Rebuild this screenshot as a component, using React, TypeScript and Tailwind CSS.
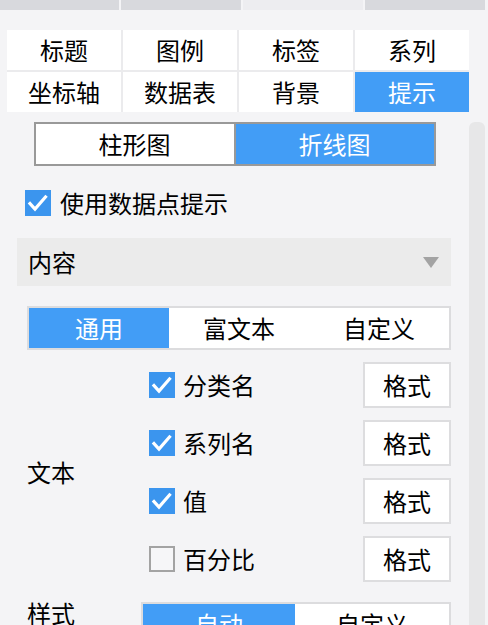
import React from 'react';

const font = { fontFamily: '"Noto Sans CJK SC", "Noto Sans", sans-serif' };

const Check = ({ checked }: { checked: boolean }) =>
  checked ? (
    <div className="w-[26px] h-[26px] bg-[#3b95ee] flex items-center justify-center shrink-0">
      <svg width="26" height="26" viewBox="0 0 26 26">
        <path d="M5 13.5l5 5.5L20.5 7" fill="none" stroke="white" strokeWidth="3.2" strokeLinecap="square" />
      </svg>
    </div>
  ) : (
    <div className="w-[26px] h-[26px] border-2 border-[#a3a3a3] bg-[#f6f6f8] shrink-0" />
  );

const FormatRow = ({ label, checked }: { label: string; checked: boolean }) => (
  <div className="h-[46px] flex items-center justify-between">
    <div className="flex items-center gap-[8px]">
      <Check checked={checked} />
      <span className="text-[24px] leading-[26px]">{label}</span>
    </div>
    <button className="w-[88px] h-[46px] bg-white border-2 border-[#dddddf] text-[24px] leading-[26px]">格式</button>
  </div>
);

const tabs = ['标题', '图例', '标签', '系列', '坐标轴', '数据表', '背景', '提示'];

export default function App() {
  return (
    <div className="w-[488px] h-[625px] overflow-hidden bg-[#f4f4f6] text-black" style={font}>
      <div className="flex gap-[2px] h-[10px]">
        <div className="w-[119px] bg-[#d8d9dd]" />
        <div className="w-[120px] bg-[#d8d9dd]" />
        <div className="w-[120px] bg-[#ededf0]" />
        <div className="w-[120px] bg-[#d8d9dd]" />
      </div>

      <div className="mt-[20px] ml-[7px] w-[462px] grid grid-cols-4 gap-[2px] bg-[#ebebed]">
        {tabs.map((t, i) => (
          <div
            key={t}
            className={
              'h-[40px] flex items-center justify-center text-[24px] ' +
              (i === 7 ? 'bg-[#429df6] text-white' : 'bg-white')
            }
          >
            {t}
          </div>
        ))}
      </div>

      <div className="flex mt-[10px]">
        <div className="w-[469px]">
          <div className="mx-auto w-[402px] h-[44px] border-2 border-[#999999] flex text-[24px]">
            <div className="flex-1 bg-white flex items-center justify-center">柱形图</div>
            <div className="w-[2px] bg-[#999999]" />
            <div className="flex-1 bg-[#429df6] text-white flex items-center justify-center">折线图</div>
          </div>

          <div className="mt-[24px] ml-[25px] flex items-center gap-[9px]">
            <Check checked />
            <span className="text-[24px] leading-[26px]">使用数据点提示</span>
          </div>

          <div className="mt-[22px] ml-[17px] w-[434px] h-[48px] bg-[#ebebeb] flex items-center justify-between pl-[11px] pr-[12px]">
            <span className="text-[24px]">内容</span>
            <svg width="16" height="11" viewBox="0 0 16 11">
              <path d="M0 0h16L8 11z" fill="#a3a3a3" />
            </svg>
          </div>

          <div className="mt-[20px] ml-[27px] w-[424px] h-[44px] border-2 border-[#dcdcde] flex text-[24px] bg-white">
            <div className="w-[140px] bg-[#429df6] text-white flex items-center justify-center">通用</div>
            <div className="w-[140px] flex items-center justify-center">富文本</div>
            <div className="flex-1 flex items-center justify-center">自定义</div>
          </div>

          <div className="mt-[12px] pl-[27px] flex">
            <div className="w-[122px] flex items-center text-[24px]">文本</div>
            <div className="w-[302px] flex flex-col gap-[12px]">
              <FormatRow label="分类名" checked />
              <FormatRow label="系列名" checked />
              <FormatRow label="值" checked />
              <FormatRow label="百分比" checked={false} />
            </div>
          </div>

          <div className="mt-[20px] pl-[27px] flex items-start">
            <div className="w-[114px] text-[24px] leading-[26px] -mt-[2px]">样式</div>
            <div className="w-[310px] h-[44px] border-2 border-[#dcdcde] bg-white flex text-[24px]">
              <div className="w-[152px] bg-[#429df6] text-white flex items-center justify-center">自动</div>
              <div className="flex-1 flex items-center justify-center">自定义</div>
            </div>
          </div>
        </div>
        <div className="w-[16px] h-[520px] bg-[#e7e7e8] rounded-t-[6px]" />
      </div>
    </div>
  );
}
